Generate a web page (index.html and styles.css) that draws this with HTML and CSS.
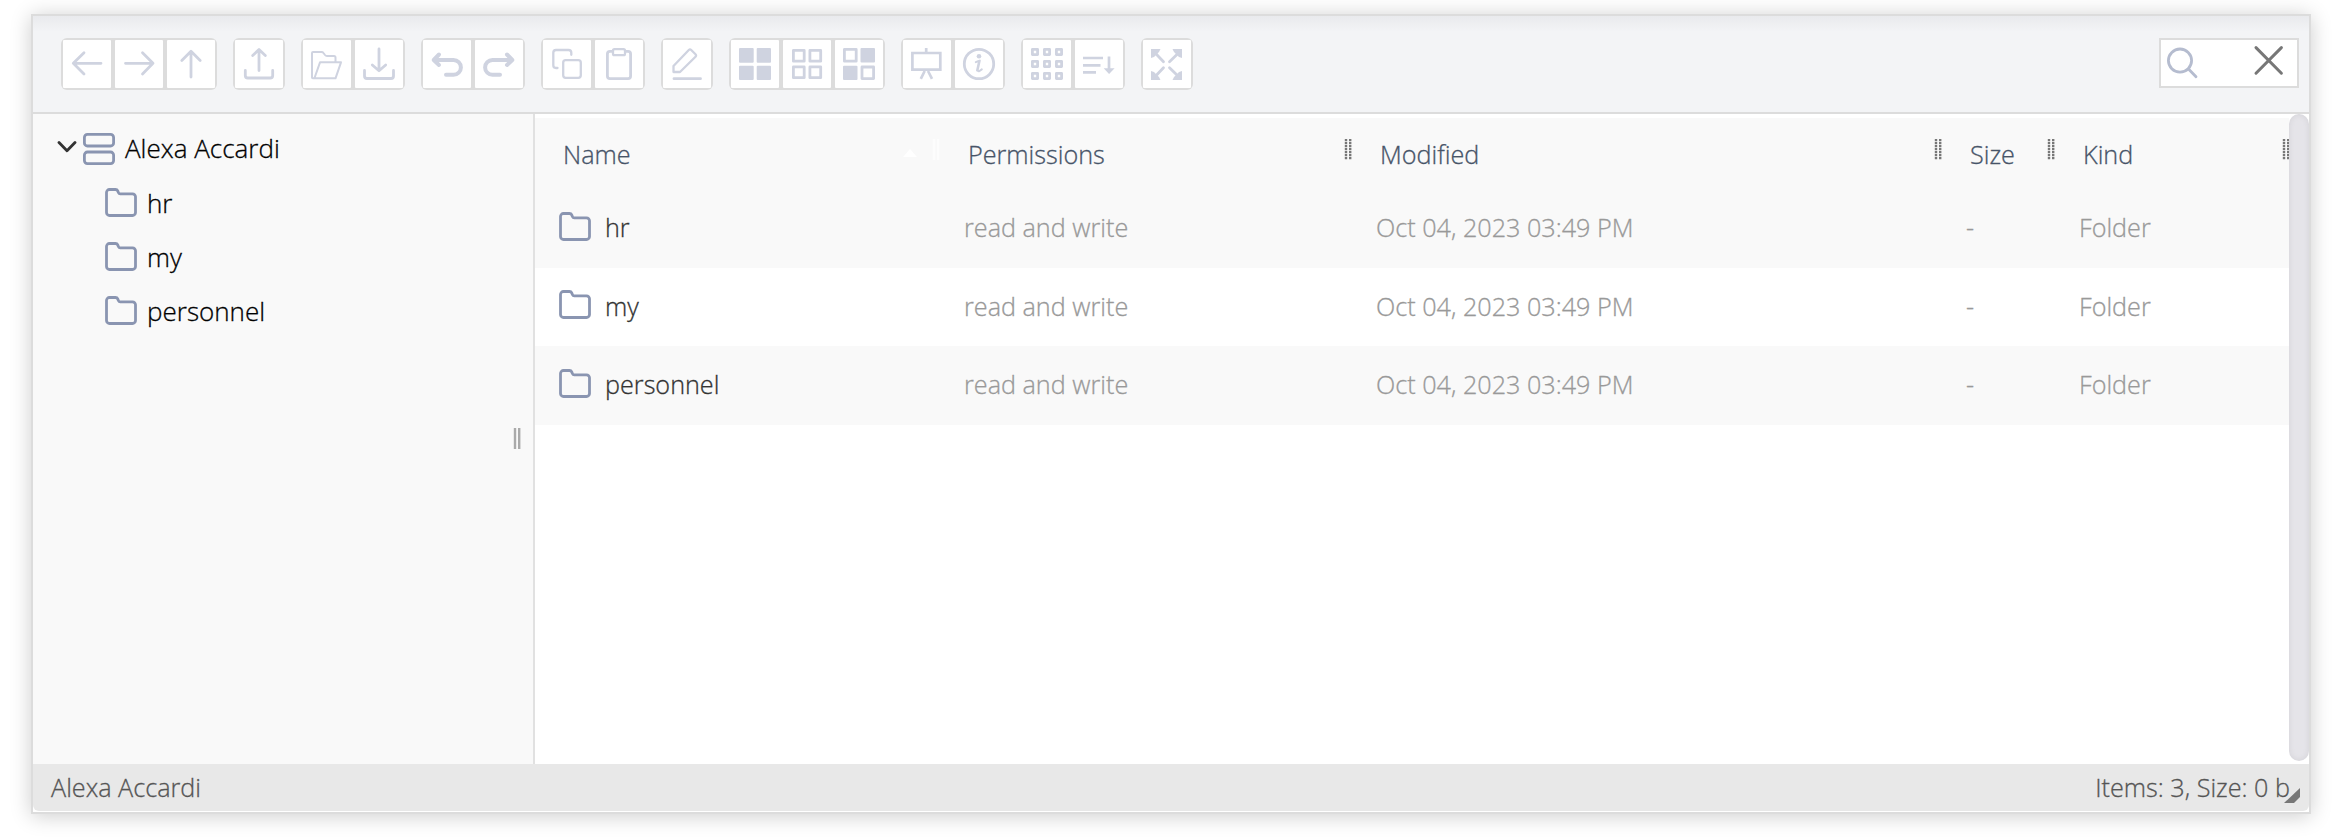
FILE: index.html
```
<!DOCTYPE html>
<html lang="en">
<head>
<meta charset="utf-8">
<title>File manager</title>
<link rel="stylesheet" href="styles.css">
</head>
<body>
<svg class="defs" width="0" height="0">
  <symbol id="folder" viewBox="0 0 32 29"><path d="M1.5 24.5V4.5a3 3 0 0 1 3-3h6q1.600 0 2.200 1.400l.8 1.800q.5 1.100 1.700 1.100h12.300a3 3 0 0 1 3 3v15.700a3 3 0 0 1-3 3h-23a3 3 0 0 1-3-3z"/></symbol>
  <symbol id="grip" viewBox="0 0 8 21"><path d="M2 0V21M6.200 0V21"/></symbol>
</svg>
<div class="window">
  <header class="toolbar">
    <div class="tools">
      <div class="group">
        <button class="tool"><svg viewBox="0 0 48 48"><path d="M38 23.300H10.500M21 12.700L10.300 23.300 21 34"/></svg></button>
        <button class="tool"><svg viewBox="0 0 48 48"><path d="M10.500 23.300H38M27.500 12.700L38 23.300 27.500 34"/></svg></button>
        <button class="tool"><svg viewBox="0 0 48 48"><path d="M24 37V11.500M14.800 20.500L24 11.300 33.200 20.500"/></svg></button>
      </div>
      <div class="group">
        <button class="tool"><svg viewBox="0 0 48 48"><path d="M24 30.500V10M17.700 15.500L24 9.500 30.300 15.500M10.300 30.500V35.500q0 2.500 2.500 2.500H35.200q2.500 0 2.500-2.500V30.500"/></svg></button>
      </div>
      <div class="group">
        <button class="tool"><svg viewBox="0 0 48 48"><path class="fine" d="M32.500 22V17.500q0-1.500-1.500-1.500H24q-1.200 0-2-1l-1.500-2q-.7-1-2-1H10q-1 0-1 1V37.500q0 .8.800.8H32.500L38 22.300H17L11.500 38"/></svg></button>
        <button class="tool"><svg viewBox="0 0 48 48"><path d="M24 9V30M17.300 25L24 30.700 30.700 25M9.500 30.500V36q0 2.500 2.500 2.500H36q2.500 0 2.500-2.500V30.500"/></svg></button>
      </div>
      <div class="group">
        <button class="tool"><svg viewBox="0 0 48 48"><path class="bold" d="M16 14.500L10.700 20 16 25M11 20H30.500a7.400 7.400 0 0 1 0 14.800H23"/></svg></button>
        <button class="tool"><svg viewBox="0 0 48 48"><path class="bold" d="M32 14.500L37.300 20 32 25M37 20H17.500a7.400 7.400 0 0 0 0 14.800H25"/></svg></button>
      </div>
      <div class="group">
        <button class="tool"><svg viewBox="0 0 48 48"><path class="mid" d="M14.500 28H13q-2.700 0-2.700-2.700V12.700q0-2.700 2.700-2.700H25.600q2.700 0 2.700 2.700V14.800"/><rect class="mid" x="20.200" y="20.200" width="17.600" height="17.600" rx="2.500"/></svg></button>
        <button class="tool"><svg viewBox="0 0 48 48"><path d="M17.500 11.300H15q-2.600 0-2.600 2.700V36q0 2.600 2.600 2.600H33q2.600 0 2.600-2.600V14q0-2.700-2.600-2.700H30.500"/><rect class="mid" x="18" y="9.200" width="12" height="6" rx="1.500"/></svg></button>
      </div>
      <div class="group">
        <button class="tool"><svg viewBox="0 0 48 48"><path d="M11 38.700H37.500"/><path class="mid" d="M10.500 32V26L25.800 10q1.200-1.200 2.400 0l4.300 4.300q1.200 1.200 0 2.400L17 32z"/></svg></button>
      </div>
      <div class="group">
        <button class="tool"><svg viewBox="0 0 48 48"><g class="solid"><rect x="8" y="8" width="14.700" height="14.700" rx="1"/><rect x="25.700" y="8" width="14.300" height="14.700" rx="1"/><rect x="8" y="25.700" width="14.700" height="14.300" rx="1"/><rect x="25.700" y="25.700" width="14.300" height="14.300" rx="1"/></g></svg></button>
        <button class="tool"><svg viewBox="0 0 48 48"><rect x="10.400" y="10.400" width="10.800" height="10.800"/><rect x="26.900" y="10.400" width="10.800" height="10.800"/><rect x="10.400" y="26.900" width="10.800" height="10.800"/><rect x="26.900" y="26.900" width="10.800" height="10.800"/></svg></button>
        <button class="tool"><svg viewBox="0 0 48 48"><rect x="9.400" y="9.400" width="11.800" height="11.800"/><rect x="27" y="27" width="11.600" height="11.600"/><g class="solid"><rect x="25.500" y="8" width="14.500" height="14.500" rx="1"/><rect x="8" y="25.700" width="14.500" height="14.300" rx="1"/></g></svg></button>
      </div>
      <div class="group">
        <button class="tool"><svg viewBox="0 0 48 48"><path class="square" d="M9.400 13H37.300V29.700H9.400zM23.200 8V12M21.700 31L17.800 38.800M25 31L29 38.800"/></svg></button>
        <button class="tool"><svg viewBox="0 0 48 48"><circle cx="24" cy="24" r="14.700"/><circle class="solid" cx="24" cy="16.200" r="2.300"/><path class="fine" d="M20.800 22.200Q23.500 21 24.800 20.600L22.800 29.500Q22.500 31.700 24.500 31L26.800 29.400M24 21.500L22 30.500"/></svg></button>
      </div>
      <div class="group">
        <button class="tool"><svg viewBox="0 0 48 48"><g class="cells"><rect x="9.400" y="9.400" width="5.200" height="5.200"/><rect x="21.400" y="9.400" width="5.200" height="5.200"/><rect x="33.400" y="9.400" width="5.200" height="5.200"/><rect x="9.400" y="21.400" width="5.200" height="5.200"/><rect x="21.400" y="21.400" width="5.200" height="5.200"/><rect x="33.400" y="21.400" width="5.200" height="5.200"/><rect x="9.400" y="33.400" width="5.200" height="5.200"/><rect x="21.400" y="33.400" width="5.200" height="5.200"/><rect x="33.400" y="33.400" width="5.200" height="5.200"/></g></svg></button>
        <button class="tool"><svg viewBox="0 0 48 48"><path class="square" d="M8 18H28M8 25.300H25.500M8 32.400H21M34 16.500V29"/><path class="solid" d="M28.700 28.200H39.600L34.100 34z"/></svg></button>
      </div>
      <div class="group">
        <button class="tool"><svg viewBox="0 0 48 48"><path d="M20.500 21.800L10.500 11.300M26.500 21.800L37.300 11.300M20.500 27.700L10.500 38.300M26.500 27.700L37.300 38.300"/><path class="solid" d="M8 18V9H17.500L16 12 11 17zM39 18V9H29.500L31 12 36 17zM8 31V40H17.500L16 37 11 32zM39 31V40H29.500L31 37 36 32z"/></svg></button>
      </div>
    </div>
    <div class="search">
      <svg viewBox="0 0 136 46"><circle class="lens" cx="19" cy="20.600" r="11.600"/><path class="lens" d="M27.500 29L35 36.800"/><path class="clear" d="M95 7.600L120.400 33.200M120.400 7.600L95 33.200"/></svg>
    </div>
  </header>
  <main class="workzone">
    <nav class="tree">
      <div class="root"><svg class="chevron" viewBox="0 0 20 12"><path d="M2 1.500L10 9.800 18 1.500"/></svg><svg class="drive" viewBox="0 0 32 32"><rect x="1.400" y="1.400" width="29.200" height="11.600" rx="3"/><rect x="1.400" y="19" width="29.200" height="11.600" rx="3"/></svg><span>Alexa Accardi</span></div>
      <div class="node"><svg class="folder"><use href="#folder"/></svg><span>hr</span></div>
      <div class="node"><svg class="folder"><use href="#folder"/></svg><span>my</span></div>
      <div class="node"><svg class="folder"><use href="#folder"/></svg><span>personnel</span></div>
      <svg class="grip splitter"><use href="#grip"/></svg>
    </nav>
    <section class="files">
      <div class="table">
        <div class="row head">
          <div class="cell">Name<i class="sort"></i><svg class="grip pale"><use href="#grip"/></svg></div>
          <div class="cell">Permissions<svg class="grip dotted"><use href="#grip"/></svg></div>
          <div class="cell">Modified<svg class="grip dotted"><use href="#grip"/></svg></div>
          <div class="cell">Size<svg class="grip dotted"><use href="#grip"/></svg></div>
          <div class="cell">Kind<svg class="grip dotted"><use href="#grip"/></svg></div>
        </div>
        <div class="row odd"><div class="cell name"><svg class="folder"><use href="#folder"/></svg>hr</div><div class="cell">read and write</div><div class="cell">Oct 04, 2023 03:49 PM</div><div class="cell">-</div><div class="cell">Folder</div></div>
        <div class="row"><div class="cell name"><svg class="folder"><use href="#folder"/></svg>my</div><div class="cell">read and write</div><div class="cell">Oct 04, 2023 03:49 PM</div><div class="cell">-</div><div class="cell">Folder</div></div>
        <div class="row odd"><div class="cell name"><svg class="folder"><use href="#folder"/></svg>personnel</div><div class="cell">read and write</div><div class="cell">Oct 04, 2023 03:49 PM</div><div class="cell">-</div><div class="cell">Folder</div></div>
      </div>
      <div class="scrollbar"></div>
    </section>
  </main>
  <footer class="status"><span>Alexa Accardi</span><span>Items: 3, Size: 0 b</span><svg class="resize" viewBox="0 0 16 15"><path d="M0 15L16 0V9L10 15z"/></svg></footer>
</div>
</body>
</html>
```
FILE: styles.css
```
* { box-sizing: border-box; }
body {
  margin: 0;
  padding: 14px 25px 24px 31px;
  background: #fff;
  font: 300 25.2px/36px "Open Sans", "Noto Sans", sans-serif;
  -webkit-text-stroke: .3px currentColor;
  overflow: hidden;
}
.defs { position: absolute; }
svg { display: block; flex: none; fill: none; stroke-linecap: round; stroke-linejoin: round; }
.window {
  width: 2280px;
  height: 800px;
  border: 2px solid #dcdcdc;
  background: #fff;
  display: flex;
  flex-direction: column;
  box-shadow: 0 2px 20px rgba(0, 0, 0, .2);
}
.toolbar {
  height: 98px;
  flex: none;
  display: flex;
  justify-content: space-between;
  padding: 22px 10px 0 28px;
  border-bottom: 2px solid #dcdcdc;
  background: linear-gradient(#e9eaed, #f3f4f6 16px);
}
.tools { display: flex; gap: 16px; }
.group {
  display: flex;
  height: 52px;
  border-radius: 6px;
  background: #dcdcdc;
}
.tool { width: 52px; height: 52px; margin: 0; border: 0; padding: 2px; background: none; }
.tool svg { width: 48px; height: 48px; background: #fff; border-radius: 1px; stroke: #cfd3e0; stroke-width: 2.8; }
.tool .fine { stroke-width: 2; }
.tool .mid { stroke-width: 2.300; }
.tool .bold { stroke-width: 4; }
.tool .square { stroke-linecap: butt; stroke-linejoin: miter; stroke-width: 2.700; }
.tool .solid { fill: #cfd3e0; stroke: none; }
.search { width: 140px; height: 50px; border: 2px solid #dcdcdc; background: #fff; }
.lens { stroke: #b5bccf; stroke-width: 2.800; }
.clear { stroke: #777; stroke-width: 3; }
.workzone { flex: 1; min-height: 0; display: flex; }
.tree {
  position: relative;
  width: 502px;
  border-right: 2px solid #e1e1e1;
  background: #f9f9f9;
  padding-top: 17px;
  color: #000;
  font-size: 26px;
}
.root { display: flex; align-items: center; height: 36px; padding-left: 24px; }
.root span { margin-left: 10px; }
.tree span { padding-bottom: 2px; }
.chevron { width: 20px; height: 12px; margin: -4px 6px 0 0; stroke: #333; stroke-width: 2.800; }
.drive { width: 32px; height: 32px; stroke: #8a95b1; stroke-width: 2.800; }
.folder { width: 32px; height: 29px; stroke: #8a95b1; stroke-width: 2.800; }
.node { display: flex; align-items: center; gap: 10px; height: 54px; padding-left: 72px; }
.root + .node { margin-top: 10px; }
.node .folder { margin-top: -3px; }
.grip { width: 8px; height: 21px; stroke: #aaa; stroke-width: 2.400; stroke-linecap: butt; }
.dotted { stroke: #777; stroke-dasharray: 2.2 .8; }
.splitter { position: absolute; right: 12px; top: 314px; }
.files { flex: 1; display: flex; align-items: stretch; }
.table { flex: 1; padding-top: 4px; }
.row { display: grid; grid-template-columns: 405px 412px 590px 113px 1fr; height: 79px; color: #999; }
.row:nth-child(3) { height: 78px; }
.cell { display: flex; align-items: center; padding: 0 0 3px 24px; position: relative; white-space: nowrap; }
.odd { background: #f9f9f9; }
.head { height: 71px; background: #f9f9f9; color: #475468; }
.head .cell { padding: 1px 0 0 28px; }
.head .grip { position: absolute; right: 0; top: 21px; }
.head .cell:last-child .grip { right: -1px; }
.head .pale { stroke: #fdfdfd; }
.sort { position: absolute; right: 23px; top: 31px; border: 7px solid transparent; border-top: 0; border-bottom: 8px solid #fff; }
.name { gap: 14px; color: #333; }
.name .folder { margin-top: -2px; }
.scrollbar { position: relative; width: 20px; margin-bottom: 3px; border-radius: 10px; background: #e5e4e9; box-shadow: inset 0 0 6px rgba(0, 0, 0, .08); }
.status {
  position: relative;
  display: flex;
  justify-content: space-between;
  height: 47px;
  flex: none;
  margin-bottom: 1px;
  padding: 5px 19px 0 18px;
  border-radius: 0 0 6px 6px;
  background: #e8e8e8;
  color: #555;
}
.resize { position: absolute; right: 9px; top: 24px; width: 16px; height: 15px; fill: #777; }
```
